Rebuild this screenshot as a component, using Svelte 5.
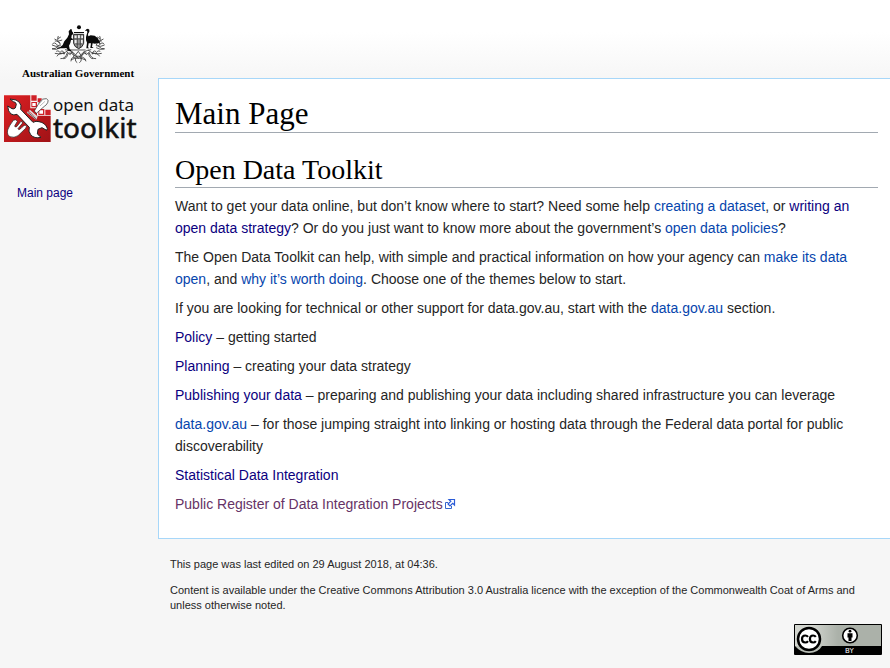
<script>
  const themes = [
    { label: 'Policy', rest: ' – getting started', visited: true },
    { label: 'Planning', rest: ' – creating your data strategy', visited: true },
    {
      label: 'Publishing your data',
      rest: ' – preparing and publishing your data including shared infrastructure you can leverage',
      visited: true
    },
    {
      label: 'data.gov.au',
      rest: ' – for those jumping straight into linking or hosting data through the Federal data portal for public discoverability',
      visited: false
    },
    { label: 'Statistical Data Integration', rest: '', visited: true }
  ];
</script>

<div class="page">
  <aside>
    <a class="logo" href="#main" aria-label="Visit the main page">
      <svg width="142" height="126" viewBox="0 0 142 126" role="img" aria-label="Australian Government Open Data Toolkit">
        <!-- coat of arms -->
        <g transform="translate(39 0) scale(.33333)">
          <g fill="none" stroke="#3a3a3a" stroke-width="2.500" transform="translate(-5 0) scale(1.050 1)">
            <path d="M66 77q-14 5-24-2m17 2q-11-14-16-4m23 3q-4-14-16-13m12 13q-12 14-20 10M89 90q-16 16-39 10m17 3q-4-14-13-9m22 9q-1-15-10-8m20 2q-5 20-20 19m13-15q-16-5-23 8m32-9q-4 17-14 16M66 83q-12 8-24 4M66 70q-12-8-6-22m-2 14l-9-5m10-1l8-5m-6 12l10-3" />
            <path d="M168 77q14 5 24-2m-17 2q11-14 16-4m-23 3q4-14 16-13m-12 13q12 14 20 10M145 90q16 16 39 10m-17 3q4-14 13-9m-22 9q1-15 10-8m-20 2q5 20 20 19m-13-15q16-5 23 8m-32-9q4 17 14 16M168 83q12 8 24 4M172 70q12-8 6-22m2 14l9-5m-10-1l-8-5m6 12l-10-3" />
            <path d="M79 89q24 1 38 27q12-25 37-27M91 99q14 0 13 14q14-9 22 0q0-13 15-14M104 111q-8 2-8 13m17-16q-9 14 1 20m8-20q8 14-2 20m8-17q10 3 11 13M96 119q22-10 42 1M96 90h42" />
            <path d="M85 96l9 8 5-9 8 13 10-14 9 14 8-13 6 9 9-8" />
          </g>
          <g fill="#0a0a0a">
            <circle cx="120" cy="22" r="6" />
            <path d="M105 36h30v3h-30z" />
            <path d="M95 27l3 1 1 6 4 5-1 4-4 3-1 8 5 3-1 3-5 0-2 9-4 8 2 10 5 3-1 3-8-1-6-8-6 1-12 0-10 1 0-3 9-1 8-7 5-11 9-11 5-10-1-9z" />
            <path d="M142 28l5-2 4 3 0 6-4 7 1 7 7-3 12 1 9 7 5 10 4 9-8-4-9 2-7-1-2 10 5 4-10 0 2-14-7 0-2 12 4 3-9 0 2-17-3-8 0-9 4-14-1-5-6 1z" />
          </g>
          <path d="M104 43h30v27q-3 12-15 16q-13-5-15-16z" fill="#999" stroke="#222" stroke-width="3" />
          <path d="M107 47h6v7h-6zM117 46h6v8h-6zM127 47h5v7h-5zM107 60h6v9h-6zM126 60h5v9h-5z" fill="#eee" />
          <path d="M115 43v41M124 43v41M105 57h28M110 72h18" stroke="#333" stroke-width="2" />
        </g>
        <text x="22" y="57" class="gov">Australian Government</text>

        <!-- toolkit emblem -->
        <defs>
          <linearGradient id="red" x1="0" y1="0" x2="1" y2="1">
            <stop offset="0" stop-color="#dc2023" />
            <stop offset="1" stop-color="#a01216" />
          </linearGradient>
        </defs>
        <g transform="translate(0 70) scale(.33333)">
          <path d="M12 16h79v39h20v22h41v79H12z" fill="url(#red)" />
          <g fill="#cf2027">
            <path d="M94 16h16v16H94zM113 25h12v12h-12zM94 36h17v16H94zM115 57h18v18h-18zM136 59h16v16h-16z" />
          </g>
          <path d="M97 39h10v9H97zM118 61h11v10h-11z" fill="#fff" />
          <g transform="translate(0 3)" stroke="#222" stroke-width="2" stroke-linejoin="round">
            <path d="M103 60l16-27q8-12 20-10q9 4 4 12q-3 7-10 11l-24 21z" fill="#fff" />
            <path d="M120 45l15-14M115 42l12-14" stroke="#999" />
            <path d="M82 63l28 21M88 58l24 21" fill="none" stroke="#ddd" stroke-width="5" />
            <path d="M83 64l26 20" fill="none" />
            <path d="M40 88q-13 17-17 29q-3 15 7 20q12 5 24-3l23-22q5-7-1-9q-4-1-15 11q-6 4-7-1l13-16q2-6-4-6L50 107q-5 3-6-2l8-14q-3-8-12-3z" fill="#fff" />
            <path d="M30 24l18 3q13 6 15 17l-1 11 37 39q9-5 18-2q19 3 25 20l-2 6-14-8-12 5-2 14 11 10q-20 5-31-8q-8-10-4-22L51 70q-10 4-18-1q-9-7-10-24l13 8q5 2 10-2l3-11q-1-7-9-8z" fill="#fff" stroke-width="3" />
          </g>
        </g>
        <text x="53" y="91" class="small">open data</text>
        <text x="53" y="118" class="big">toolkit</text>
      </svg>
    </a>
    <nav aria-label="Site"><a class="visited" href="#main">Main page</a></nav>
  </aside>

  <div class="column">
    <main id="main">
      <h1>Main Page</h1>
      <h2>Open Data Toolkit</h2>
      <p>
        Want to get your data online, but don’t know where to start? Need some help <a href="#dataset">creating a dataset</a>,
        or <a class="visited" href="#strategy">writing an open data strategy</a>? Or do you just want to know more about the
        government’s <a href="#policies">open data policies</a>?
      </p>
      <p>
        The Open Data Toolkit can help, with simple and practical information on how your agency can
        <a href="#open">make its data open</a>, and <a href="#worth">why it’s worth doing</a>. Choose one of the themes below
        to start.
      </p>
      <p>
        If you are looking for technical or other support for data.gov.au, start with the
        <a href="#datagov">data.gov.au</a> section.
      </p>
      {#each themes as theme}
        <p><a href="#theme" class:visited={theme.visited}>{theme.label}</a>{theme.rest}</p>
      {/each}
      <p>
        <a class="external" href="#register">Public Register of Data Integration Projects<svg width="13" height="12" viewBox="0 0 13 12" aria-hidden="true">
            <path d="M5 4.500H2.500v6h6V8" fill="#fff" stroke="#36c" />
            <path d="M6 1.500h5.500v5.500L9.700 5.300 7 8 5 6l2.800-2.700z" fill="#fff" stroke="#2a5bd7" stroke-width="1.200" />
          </svg></a>
      </p>
    </main>

    <footer>
      <p>This page was last edited on 29 August 2018, at 04:36.</p>
      <p>
        Content is available under the Creative Commons Attribution 3.0 Australia licence with the exception of the
        Commonwealth Coat of Arms and unless otherwise noted.
      </p>
      <a class="licence" href="#licence" aria-label="Creative Commons Attribution">
        <svg width="88" height="31" viewBox="0 0 88 31" aria-hidden="true">
          <defs>
            <linearGradient id="grey"><stop offset=".2" stop-color="#d2d5cf" /><stop offset=".5" stop-color="#abb1a9" /></linearGradient>
          </defs>
          <rect width="88" height="31" rx="1" />
          <path d="M1 1h86v21H1z" fill="url(#grey)" />
          <path d="M1 22h27q-4 7-13 7-8 0-14-7z" fill="#b9beb6" />
          <circle cx="15" cy="15" r="11" fill="#fff" stroke="#000" stroke-width="2.500" />
          <path d="M14 12.800q-1-1.300-2.700-1.300Q8 11.500 8 15t3.300 3.500q1.700 0 2.700-1.400M21.800 12.800q-1-1.300-2.700-1.300-3.200 0-3.200 3.500t3.200 3.500q1.700 0 2.700-1.400" fill="none" stroke="#000" stroke-width="2.200" />
          <circle cx="56" cy="11.500" r="7.300" fill="#fff" stroke="#000" stroke-width="1.600" />
          <circle cx="56" cy="7.200" r="1.400" />
          <path d="M53.500 9.200h5v4.300h-1v3.500h-3v-3.500h-1z" />
          <text x="51" y="29" class="by">BY</text>
        </svg>
      </a>
    </footer>
  </div>
</div>

<style>
  :global(body) {
    margin: 0;
    background: #f6f6f6;
  }
  .page {
    display: flex;
    min-height: 100vh;
    font-family: 'Liberation Sans', Arial, sans-serif;
    color: #252525;
    background: linear-gradient(#fff 40%, #f6f6f6) no-repeat 0 0 / 100% 80px;
  }
  a {
    color: #0645ad;
    text-decoration: none;
  }
  a:hover {
    text-decoration: underline;
  }
  a.visited {
    color: #0b0080;
  }
  a.external {
    color: #663366;
  }
  aside {
    flex: 0 0 158px;
    padding-top: 20px;
  }
  .logo,
  .logo svg,
  .licence svg {
    display: block;
  }
  nav {
    padding: 39px 17px 0;
    font-size: 12px;
    line-height: 16px;
  }
  .gov {
    font: bold 11px 'Liberation Serif', serif;
    fill: #000;
  }
  .small {
    font: 17px 'Noto Sans', sans-serif;
    fill: #111;
  }
  .big {
    font: 28px 'Noto Sans', sans-serif;
    fill: #111;
    stroke: #111;
    stroke-width: 0.5px;
  }
  .by {
    font: 7px 'DejaVu Sans', sans-serif;
    fill: #fff;
  }
  .column {
    flex: 1;
    min-width: 0;
    padding-top: 78px;
  }
  main {
    padding: 16px 12px 16px 16px;
    background: #fff;
    border: 1px solid #a7d7f9;
    border-right: 0;
    font-size: 14px;
    line-height: 22px;
  }
  h1,
  h2 {
    margin: 0;
    border-bottom: 1px solid #a2a9b1;
    color: #000;
    font-family: 'Liberation Serif', serif;
    font-weight: 400;
  }
  h1 {
    font-size: 31px;
    line-height: 37px;
  }
  h2 {
    margin-top: 20px;
    font-size: 28px;
    line-height: 34px;
  }
  p {
    margin: 7px 0;
  }
  .external svg {
    vertical-align: -1px;
  }
  footer {
    padding: 18px 8px 12px 12px;
    font-size: 11px;
    line-height: 15px;
  }
  footer p {
    margin: 0 0 11px;
  }
  .licence {
    width: 88px;
    margin-left: auto;
    display: block;
  }
</style>
